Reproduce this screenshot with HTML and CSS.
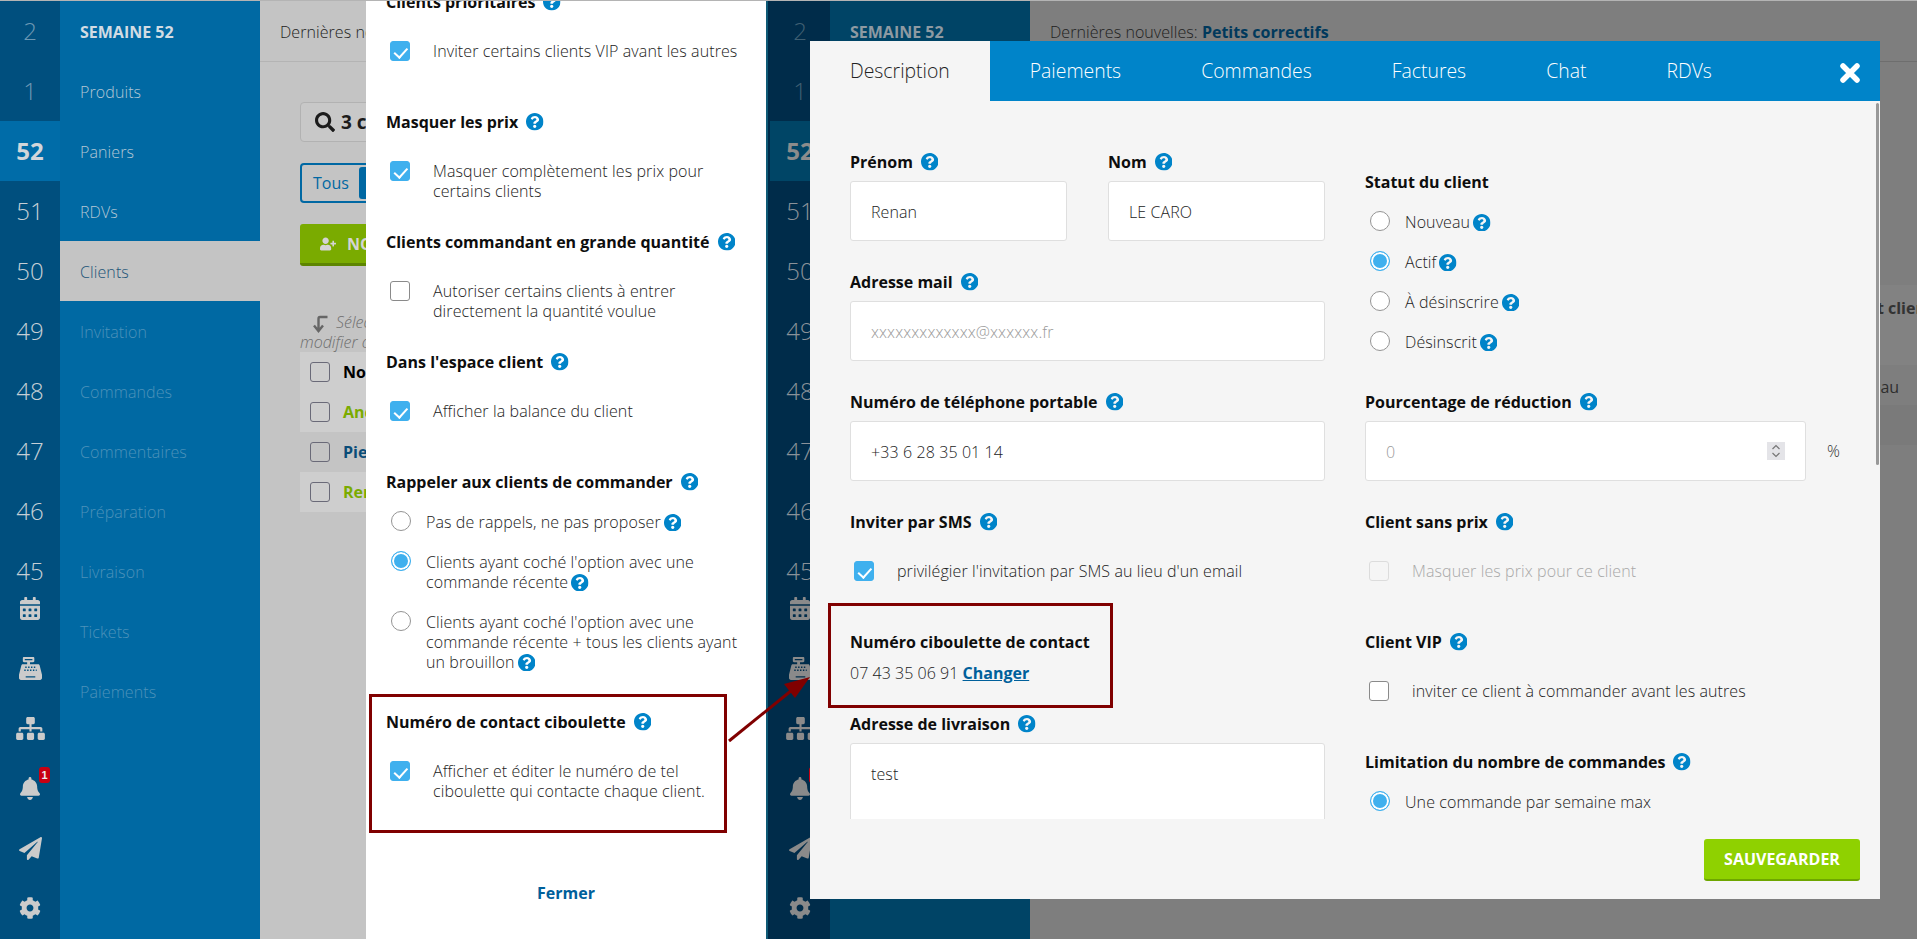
FILE: index.html
```html
<!DOCTYPE html>
<html lang="fr">
<head>
<meta charset="utf-8">
<title>Clients</title>
<link rel="stylesheet" href="styles.css">
</head>
<body>
<svg class="sprite" aria-hidden="true">
  <symbol id="i-help" viewBox="8 8 496 496"><path d="M504 256c0 136.997-111.043 248-248 248S8 392.997 8 256C8 119.083 119.043 8 256 8s248 111.083 248 248zM262.655 90c-54.497 0-89.255 22.957-116.549 63.758-3.536 5.286-2.353 12.415 2.715 16.258l34.699 26.31c5.205 3.947 12.621 3.008 16.665-2.122 17.864-22.658 30.113-35.797 57.303-35.797 20.429 0 45.698 13.148 45.698 32.958 0 14.976-12.363 22.667-32.534 33.976C247.128 238.528 216 254.941 216 296v4c0 6.627 5.373 12 12 12h56c6.627 0 12-5.373 12-12v-1.333c0-28.462 83.186-29.647 83.186-106.667 0-58.002-60.165-102-116.531-102zM256 338c-25.365 0-46 20.635-46 46 0 25.364 20.635 46 46 46s46-20.636 46-46c0-25.365-20.635-46-46-46z"/></symbol>
  <symbol id="i-cal" viewBox="0 0 448 512"><path d="M0 464c0 26.5 21.5 48 48 48h352c26.5 0 48-21.5 48-48V192H0v272zm320-196c0-6.6 5.4-12 12-12h40c6.6 0 12 5.4 12 12v40c0 6.6-5.4 12-12 12h-40c-6.6 0-12-5.4-12-12v-40zm0 128c0-6.6 5.4-12 12-12h40c6.6 0 12 5.4 12 12v40c0 6.6-5.4 12-12 12h-40c-6.6 0-12-5.4-12-12v-40zM192 268c0-6.6 5.4-12 12-12h40c6.6 0 12 5.4 12 12v40c0 6.6-5.4 12-12 12h-40c-6.6 0-12-5.4-12-12v-40zm0 128c0-6.6 5.4-12 12-12h40c6.6 0 12 5.4 12 12v40c0 6.6-5.4 12-12 12h-40c-6.6 0-12-5.4-12-12v-40zM64 268c0-6.6 5.4-12 12-12h40c6.6 0 12 5.4 12 12v40c0 6.6-5.4 12-12 12H76c-6.6 0-12-5.4-12-12v-40zm0 128c0-6.6 5.4-12 12-12h40c6.6 0 12 5.4 12 12v40c0 6.6-5.4 12-12 12H76c-6.6 0-12-5.4-12-12v-40zM400 64h-48V16c0-8.8-7.2-16-16-16h-32c-8.8 0-16 7.2-16 16v48H160V16c0-8.8-7.2-16-16-16h-32c-8.8 0-16 7.2-16 16v48H48C21.5 64 0 85.5 0 112v48h448v-48c0-26.5-21.5-48-48-48z"/></symbol>
  <symbol id="i-cash" viewBox="0 0 24 24"><path fill-rule="evenodd" d="M4 1.2c0-.6.5-1.2 1.2-1.2h9.6c.7 0 1.2.6 1.2 1.2v3c0 .6-.5 1.2-1.200 1.200H11.500V7.500H20c.8 0 1.300.5 1.500 1.200L24 18.500V22c0 1.100-.9 2-2 2H2c-1.100 0-2-.9-2-2v-3.500L2.500 8.700C2.700 8 3.200 7.500 4 7.500h4.500V5.400H5.200C4.500 5.400 4 4.800 4 4.200zM6 2v1.500h8V2zM6.500 10v1.500H8V10zm3 0v1.500H11V10zm3 0v1.500H14V10zm3 0v1.500H17V10zM5.500 13v1.500H7V13zm3 0v1.500H10V13zm3 0v1.500H13V13zm3 0v1.500H16V13zm3 0v1.500H18.500V13zM7 20v1.500h10V20z"/></symbol>
  <symbol id="i-map" viewBox="0 0 640 512"><path d="M128 352H32c-17.67 0-32 14.33-32 32v96c0 17.67 14.33 32 32 32h96c17.67 0 32-14.33 32-32v-96c0-17.67-14.33-32-32-32zm-24-80h192v48h48v-48h192v48h48v-57.59c0-21.17-17.23-38.41-38.41-38.41H344v-64h40c17.67 0 32-14.33 32-32V32c0-17.67-14.33-32-32-32H256c-17.67 0-32 14.33-32 32v96c0 17.67 14.33 32 32 32h40v64H94.41C73.23 224 56 241.23 56 262.41V320h48v-48zm264 80h-96c-17.67 0-32 14.33-32 32v96c0 17.67 14.33 32 32 32h96c17.67 0 32-14.33 32-32v-96c0-17.67-14.33-32-32-32zm240 0h-96c-17.67 0-32 14.33-32 32v96c0 17.67 14.33 32 32 32h96c17.67 0 32-14.33 32-32v-96c0-17.67-14.33-32-32-32z"/></symbol>
  <symbol id="i-bell" viewBox="0 0 448 512"><path d="M224 512c35.32 0 63.97-28.65 63.97-64H160.03c0 35.35 28.65 64 63.97 64zm215.39-149.71c-19.32-20.76-55.47-51.99-55.47-154.29 0-77.7-54.48-139.9-127.94-155.16V32c0-17.67-14.32-32-31.98-32s-31.98 14.33-31.98 32v20.84C118.56 68.1 64.08 130.3 64.08 208c0 102.3-36.15 133.53-55.47 154.29-6 6.45-8.66 14.16-8.61 21.71.11 16.4 12.98 32 32.1 32h383.8c19.12 0 32-15.6 32.1-32 .05-7.55-2.61-15.27-8.61-21.71z"/></symbol>
  <symbol id="i-plane" viewBox="0 0 512 512"><path d="M476 3.2L12.5 270.6c-18.1 10.4-15.8 35.6 2.2 43.2L121 358.4l287.3-253.2c5.5-4.9 13.3 2.6 8.6 8.3L176 407v80.5c0 23.6 28.5 32.9 42.5 15.8L282 426l124.6 52.2c14.2 6 30.4-2.9 33-18.2l72-432C515 7.8 493.3-6.8 476 3.2z"/></symbol>
  <symbol id="i-cog" viewBox="0 0 512 512"><path d="M487.4 315.7l-42.6-24.6c4.3-23.2 4.3-47 0-70.2l42.6-24.6c4.9-2.8 7.1-8.6 5.5-14-11.1-35.6-30-67.8-54.7-94.6-3.8-4.1-10-5.1-14.8-2.3L380.8 110c-17.9-15.4-38.5-27.3-60.8-35.1V25.800c0-5.600-3.900-10.500-9.400-11.700-36.700-8.200-74.300-7.800-109.200 0-5.500 1.200-9.400 6.100-9.400 11.700V75c-22.200 7.900-42.800 19.800-60.800 35.100L88.700 85.500c-4.900-2.800-11-1.900-14.800 2.300-24.700 26.700-43.600 58.900-54.700 94.600-1.700 5.400.6 11.200 5.500 14L67.300 221c-4.300 23.200-4.300 47 0 70.200l-42.600 24.600c-4.900 2.800-7.100 8.600-5.500 14 11.100 35.600 30 67.800 54.700 94.600 3.800 4.100 10 5.100 14.800 2.300l42.600-24.600c17.900 15.400 38.500 27.300 60.800 35.100v49.200c0 5.600 3.900 10.500 9.400 11.700 36.700 8.200 74.300 7.800 109.200 0 5.500-1.200 9.400-6.100 9.400-11.700v-49.200c22.200-7.900 42.800-19.800 60.800-35.100l42.600 24.600c4.900 2.800 11 1.900 14.800-2.300 24.700-26.700 43.600-58.900 54.700-94.600 1.500-5.500-.7-11.300-5.600-14.100zM256 336c-44.100 0-80-35.900-80-80s35.900-80 80-80 80 35.900 80 80-35.900 80-80 80z"/></symbol>
  <symbol id="i-search" viewBox="0 0 512 512"><path d="M505 442.700L405.300 343c-4.500-4.500-10.600-7-17-7H372c27.600-35.300 44-79.700 44-128C416 93.100 322.900 0 208 0S0 93.100 0 208s93.100 208 208 208c48.300 0 92.700-16.400 128-44v16.300c0 6.400 2.500 12.500 7 17l99.700 99.700c9.400 9.400 24.600 9.400 33.900 0l28.300-28.300c9.400-9.400 9.400-24.600.1-34zM208 336c-70.700 0-128-57.200-128-128 0-70.700 57.200-128 128-128 70.700 0 128 57.200 128 128 0 70.700-57.200 128-128 128z"/></symbol>
  <symbol id="i-user" viewBox="0 0 640 512"><path d="M624 208h-64v-64c0-8.800-7.200-16-16-16h-32c-8.800 0-16 7.200-16 16v64h-64c-8.800 0-16 7.200-16 16v32c0 8.800 7.200 16 16 16h64v64c0 8.800 7.200 16 16 16h32c8.800 0 16-7.200 16-16v-64h64c8.800 0 16-7.200 16-16v-32c0-8.800-7.200-16-16-16zm-400 48c70.700 0 128-57.300 128-128S294.700 0 224 0 96 57.300 96 128s57.300 128 128 128zm89.600 32h-16.700c-22.200 10.200-46.900 16-72.900 16s-50.600-5.800-72.900-16h-16.700C60.200 288 0 348.200 0 422.400V464c0 26.500 21.500 48 48 48h352c26.500 0 48-21.500 48-48v-41.600c0-74.200-60.200-134.400-134.400-134.400z"/></symbol>
</svg>

<div class="stage">
  <!-- LEFT SCREENSHOT -->
  <section class="shot shot-left">
    <nav class="weeks">
      <div class="week-list">
        <div class="week dim">2</div><div class="week dim">1</div><div class="week current">52</div><div class="week">51</div><div class="week">50</div><div class="week">49</div><div class="week">48</div><div class="week">47</div><div class="week">46</div><div class="week">45</div>
      </div>
      <div class="tool"><svg class="ti ti-cal"><use href="#i-cal"/></svg></div>
      <div class="tool"><svg class="ti ti-cash"><use href="#i-cash"/></svg></div>
      <div class="tool"><svg class="ti ti-map"><use href="#i-map"/></svg></div>
      <div class="tool"><svg class="ti ti-cal"><use href="#i-bell"/></svg><span class="badge">1</span></div>
      <div class="tool"><svg class="ti ti-cash"><use href="#i-plane"/></svg></div>
      <div class="tool"><svg class="ti ti-cog"><use href="#i-cog"/></svg></div>
    </nav>
    <nav class="menu">
      <div class="mi head">SEMAINE 52</div>
      <div class="mi">Produits</div><div class="mi">Paniers</div><div class="mi">RDVs</div><div class="mi active">Clients</div>
      <div class="mi off">Invitation</div><div class="mi off">Commandes</div><div class="mi off">Commentaires</div><div class="mi off">Préparation</div><div class="mi off">Livraison</div><div class="mi off">Tickets</div><div class="mi off">Paiements</div>
    </nav>
    <main class="main">
      <div class="topbar">Dernières no</div>
      <div class="list-page">
        <div class="searchbox"><svg class="search-ic"><use href="#i-search"/></svg><b>3 c</b></div>
        <div class="toggle"><span class="toggle-off">Tous</span><span class="toggle-on"></span></div>
        <div class="newbtn"><svg class="user-ic"><use href="#i-user"/></svg><b>NO</b></div>
        <div class="hint"><svg class="hint-arrow" viewBox="0 0 16 18"><path d="M15 2H7.500Q6 2 6 4v11M1.500 10.500 6 16l4.500-5.500" fill="none" stroke="#666" stroke-width="2.400"/></svg><i>Sélec<br>modifier c</i></div>
        <div class="trow band tall"><span class="box"></span><b>Nom</b></div>
        <div class="trow band"><span class="box"></span><b class="green">And</b></div>
        <div class="trow"><span class="box"></span><b class="navy">Pie</b></div>
        <div class="trow band"><span class="box"></span><b class="green">Ren</b></div>
      </div>
    </main>

    <aside class="panel">
      <div class="panel-inner">
        <div class="title">Clients prioritaires <svg class="help"><use href="#i-help"/></svg></div>
        <div class="opt"><span class="box on"></span><span>Inviter certains clients VIP avant les autres</span></div>
        <div class="title">Masquer les prix <svg class="help"><use href="#i-help"/></svg></div>
        <div class="opt"><span class="box on"></span><span>Masquer complètement les prix pour certains clients</span></div>
        <div class="title">Clients commandant en grande quantité <svg class="help"><use href="#i-help"/></svg></div>
        <div class="opt"><span class="box"></span><span>Autoriser certains clients à entrer directement la quantité voulue</span></div>
        <div class="title">Dans l'espace client <svg class="help"><use href="#i-help"/></svg></div>
        <div class="opt"><span class="box on"></span><span>Afficher la balance du client</span></div>
        <div class="title tight">Rappeler aux clients de commander <svg class="help"><use href="#i-help"/></svg></div>
        <div class="radios spaced">
          <div class="radio"><span class="dot"></span><span class="rl">Pas de rappels, ne pas proposer<svg class="help in"><use href="#i-help"/></svg></span></div>
          <div class="radio"><span class="dot on"></span><span class="rl">Clients ayant coché l'option avec une commande récente<svg class="help in"><use href="#i-help"/></svg></span></div>
          <div class="radio"><span class="dot"></span><span class="rl">Clients ayant coché l'option avec une commande récente + tous les clients ayant un brouillon<svg class="help in"><use href="#i-help"/></svg></span></div>
        </div>
        <div class="title">Numéro de contact ciboulette <svg class="help"><use href="#i-help"/></svg></div>
        <div class="opt"><span class="box on"></span><span>Afficher et éditer le numéro de tel ciboulette qui contacte chaque client.</span></div>
        <div class="close-link">Fermer</div>
      </div>
    </aside>
  </section>

  <!-- RIGHT SCREENSHOT -->
  <section class="shot shot-right">
    <nav class="weeks">
      <div class="week-list">
        <div class="week dim">2</div><div class="week dim">1</div><div class="week current">52</div><div class="week">51</div><div class="week">50</div><div class="week">49</div><div class="week">48</div><div class="week">47</div><div class="week">46</div><div class="week">45</div>
      </div>
      <div class="tool"><svg class="ti ti-cal"><use href="#i-cal"/></svg></div>
      <div class="tool"><svg class="ti ti-cash"><use href="#i-cash"/></svg></div>
      <div class="tool"><svg class="ti ti-map"><use href="#i-map"/></svg></div>
      <div class="tool"><svg class="ti ti-cal"><use href="#i-bell"/></svg><span class="badge">1</span></div>
      <div class="tool"><svg class="ti ti-cash"><use href="#i-plane"/></svg></div>
      <div class="tool"><svg class="ti ti-cog"><use href="#i-cog"/></svg></div>
    </nav>
    <nav class="menu">
      <div class="mi head">SEMAINE 52</div>
    </nav>
    <main class="main">
      <div class="topbar">Dernières nouvelles: <b class="news">Petits correctifs</b></div>
      <div class="client-table">
        <div class="ct-row ct-head"><b>Statut client</b></div>
        <div class="ct-row ct-plain"><span>Nouveau</span></div>
        <div class="ct-row ct-alt"></div>
        <div class="ct-row ct-plain"></div>
      </div>
    </main>

    <div class="modal">
      <div class="tabs">
        <div class="tab active">Description</div>
        <div class="tab">Paiements</div>
        <div class="tab">Commandes</div>
        <div class="tab">Factures</div>
        <div class="tab">Chat</div>
        <div class="tab">RDVs</div>
        <svg class="x" viewBox="0 0 20 20"><path d="M3 3l14 14M17 3 3 17" stroke="#fff" stroke-width="5.500" fill="none" stroke-linecap="round"/></svg>
      </div>
      <div class="modal-body">
        <div class="col">
          <div class="two">
            <div class="field"><div class="title sm">Prénom <svg class="help"><use href="#i-help"/></svg></div><div class="input">Renan</div></div>
            <div class="field"><div class="title sm">Nom <svg class="help"><use href="#i-help"/></svg></div><div class="input">LE CARO</div></div>
          </div>
          <div class="field"><div class="title sm">Adresse mail <svg class="help"><use href="#i-help"/></svg></div><div class="input muted">xxxxxxxxxxxxx@xxxxxx.fr</div></div>
          <div class="field"><div class="title sm">Numéro de téléphone portable <svg class="help"><use href="#i-help"/></svg></div><div class="input">+33 6 28 35 01 14</div></div>
          <div class="title">Inviter par SMS <svg class="help"><use href="#i-help"/></svg></div>
          <div class="opt"><span class="box on"></span><span>privilégier l'invitation par SMS au lieu d'un email</span></div>
          <div class="title val-title">Numéro ciboulette de contact</div>
          <div class="value">07 43 35 06 91 <a class="change">Changer</a></div>
          <div class="title sm">Adresse de livraison <svg class="help"><use href="#i-help"/></svg></div>
          <div class="input area">test</div>
        </div>
        <div class="col col-r">
          <div class="title statut">Statut du client</div>
          <div class="radios status">
            <div class="radio"><span class="dot"></span><span class="rl">Nouveau<svg class="help in"><use href="#i-help"/></svg></span></div>
            <div class="radio"><span class="dot on"></span><span class="rl">Actif<svg class="help in"><use href="#i-help"/></svg></span></div>
            <div class="radio"><span class="dot"></span><span class="rl">À désinscrire<svg class="help in"><use href="#i-help"/></svg></span></div>
            <div class="radio"><span class="dot"></span><span class="rl">Désinscrit<svg class="help in"><use href="#i-help"/></svg></span></div>
          </div>
          <div class="field"><div class="title sm">Pourcentage de réduction <svg class="help"><use href="#i-help"/></svg></div>
            <div class="pct"><div class="input muted grow">0<span class="spin"><svg viewBox="0 0 18 18"><path d="M5.500 7 9 3.500 12.500 7M5.500 11 9 14.500 12.500 11" fill="none" stroke="#777" stroke-width="1.200"/></svg></span></div><span class="pct-sign">%</span></div>
          </div>
          <div class="title">Client sans prix <svg class="help"><use href="#i-help"/></svg></div>
          <div class="opt faded"><span class="box off"></span><span>Masquer les prix pour ce client</span></div>
          <div class="title">Client VIP <svg class="help"><use href="#i-help"/></svg></div>
          <div class="opt"><span class="box"></span><span>inviter ce client à commander avant les autres</span></div>
          <div class="title tight">Limitation du nombre de commandes <svg class="help"><use href="#i-help"/></svg></div>
          <div class="radio"><span class="dot on"></span><span class="rl">Une commande par semaine max</span></div>
        </div>
      </div>
      <div class="modal-foot"><div class="save">SAUVEGARDER</div></div>
      <div class="scrollbar"></div>
    </div>
  </section>

  <!-- ANNOTATIONS -->
  <div class="mark mark-a"></div>
  <div class="mark mark-b"></div>
  <svg class="arrow" viewBox="0 0 90 80"><path d="M3 72 71 17" stroke="#800000" stroke-width="3" fill="none"/><path d="M84 8 58 15 69 29z" fill="#800000"/></svg>
</div>
</body>
</html>
```

FILE: styles.css
```css
* { box-sizing: border-box; }
html, body { margin: 0; padding: 0; }
body {
  width: 1917px; height: 939px; overflow: hidden;
  font-family: "Open Sans", "Liberation Sans", sans-serif;
  font-size: 16px; line-height: 20px; font-weight: 300; color: #222;
  letter-spacing: .1px;
  background: #fff;
}
.sprite { position: absolute; width: 0; height: 0; }
.stage { position: relative; display: flex; width: 1917px; height: 939px; border-top: 1px solid #b4b4b4; }

/* screenshot frames */
.shot { position: relative; display: flex; height: 938px; overflow: hidden; }
.shot-left {
  width: 766px;
  --wk: #004f7e; --wk-cur: #006ca8; --wk-txt: #c6cfd6; --wk-dim: #6c98b4; --wk-strong: #d2d6da;
  --mn: #0069a3; --mn-txt: #b3c7d5; --mn-off: #4c92ba; --mn-head: #d2dce3;
  --bg: #c4c4c4; --ic: #cbcbcb;
}
.shot-right {
  flex: 1; border-left: 2px solid #0f5a76;
  --wk: #002c4a; --wk-cur: #004566; --wk-txt: #8a9299; --wk-dim: #3f5f72; --wk-strong: #8c8c8c;
  --mn: #004466; --mn-txt: #6f8a9b; --mn-off: #2b6486; --mn-head: #8e9aa2;
  --bg: #7e7e7e; --ic: #8a8a8a;
}

/* week rail */
.weeks { flex: none; width: 60px; background: var(--wk); }
.week-list { margin-bottom: -23px; }
.week { height: 60px; display: flex; align-items: center; justify-content: center; font-size: 24px; letter-spacing: 0; color: var(--wk-txt); }
.week.dim { color: var(--wk-dim); }
.week.current { background: var(--wk-cur); color: var(--wk-strong); font-weight: 700; }
.tool { position: relative; height: 60px; display: flex; align-items: center; justify-content: center; }
.ti { fill: var(--ic); height: 23px; }
.ti-cal { width: 20px; }
.ti-cash { width: 23px; }
.ti-map { width: 29px; }
.ti-cog { width: 22px; height: 22px; }
.badge {
  position: absolute; left: 39px; top: 9px; width: 11px; height: 16px; border-radius: 3px;
  background: #c80012; color: #eee; font: 700 11px/16px "Liberation Sans", sans-serif; text-align: center;
}
.shot-right .weeks { width: 62px; padding-left: 2px; }

/* menu */
.menu { flex: none; width: 200px; background: var(--mn); }
.mi { height: 60px; padding: 2px 0 0 20px; display: flex; align-items: center; color: var(--mn-txt); font-weight: 300; }
.mi.head { color: var(--mn-head); font-weight: 700; letter-spacing: 0; }
.mi.active { background: var(--bg); color: #1d5478; }
.mi.off { color: var(--mn-off); }

/* main page behind */
.main { flex: 1; min-width: 0; background: var(--bg); overflow: hidden; }
.shot-left .main { flex: none; width: 106px; }
.topbar { height: 61px; padding: 21px 0 0 20px; border-bottom: 1px solid #b4b4b4; white-space: nowrap; color: #1d1d1d; font-weight: 300; letter-spacing: .06px; }
.shot-right .topbar { border-bottom-color: #6e6e6e; }
.news { color: #00395c; font-weight: 700; letter-spacing: 0; }
.list-page { padding: 40px 0 0 40px; width: 106px; font-weight: 400; letter-spacing: 0; white-space: nowrap; }
.searchbox { width: 100px; height: 40px; display: flex; align-items: center; gap: 6px; padding-left: 14px; background: #c8c8c8; border: 1px solid #b2b2b2; border-radius: 4px; font-size: 19px; color: #1c1c1c; }
.search-ic { width: 20px; height: 20px; fill: #1c1c1c; }
.toggle { width: 100px; margin-top: 21px; height: 40px; display: flex; align-items: stretch; padding: 2px; border: 2px solid #0068a3; border-radius: 4px; color: #0068a3; font-size: 16px; }
.toggle-off { padding: 0 10px 0 9px; display: flex; align-items: center; }
.toggle-on { flex: 1; background: #0068a3; border-radius: 3px; }
.newbtn { width: 100px; margin-top: 21px; height: 42px; display: flex; align-items: center; gap: 11px; padding-left: 20px; background: #7aab00; border-bottom: 3px solid #5d8500; border-radius: 3px; color: #d4d4d4; }
.user-ic { width: 16px; height: 14px; fill: #d4d4d4; }
.hint { position: relative; margin-top: 46px; font-size: 16px; line-height: 20px; color: #6e6e6e; font-weight: 300; }
.hint i { display: block; text-indent: 36px; }
.hint-arrow { position: absolute; left: 12px; top: 3px; width: 17px; height: 18px; }
.trow { width: 100px; height: 40px; display: flex; align-items: center; gap: 13px; padding-left: 10px; }
.band { background: #cecece; }
.trow b { color: #000; }
.trow .green { color: #7aab00; }
.trow .navy { color: #0a4c78; }
.trow .box { background: transparent; border-color: #6a6a78; margin: 0; }

/* drawer */
.panel { position: absolute; left: 366px; top: 0; width: 400px; height: 938px; background: #fff; overflow: hidden; }
.panel-inner { margin-top: -9px; padding: 0 20px; }
.title { display: flex; align-items: center; gap: 8px; height: 20px; margin-bottom: 29px; font-weight: 700; color: #0e0e0e; white-space: nowrap; letter-spacing: 0; }
.title.tight { margin-bottom: 19px; }
.title.sm { margin-bottom: 9px; }
.help { width: 17.500px; height: 17.500px; fill: #0084c9; flex: none; }
.help.in { margin-left: 3px; vertical-align: -3px; }
.opt { display: flex; min-height: 40px; margin: 0 0 31px 4px; gap: 23px; }
.radio { display: flex; gap: 15px; margin-left: 5px; }
.rl { position: relative; top: 1px; }
.radios { display: flex; flex-direction: column; gap: 20px; }
.radios.spaced { margin-bottom: 41px; }
.box { flex: none; position: relative; width: 20px; height: 20px; border: 1px solid #8a8a8a; border-radius: 3px; background: #fff; }
.box.on { background: #3fb0ee; border-color: #3fb0ee; }
.box.on::after {
  content: ""; position: absolute; left: 6px; top: 2.500px; width: 6px; height: 10.500px;
  border: solid #fff; border-width: 0 2.500px 2.500px 0; transform: rotate(42deg);
}
.box.off { background: transparent; border-color: #dcdcdc; }
.dot { flex: none; width: 20px; height: 20px; border-radius: 50%; border: 1px solid #949494; background: #fff; }
.dot.on { border-color: #3fb0ee; background: #3fb0ee; box-shadow: inset 0 0 0 2px #fff; }
.close-link { margin-top: 82px; text-align: center; font-weight: 700; color: #00609b; letter-spacing: 0; }

/* modal */
.modal { position: absolute; left: 42px; top: 40px; width: 1070px; height: 858px; background: #f5f5f5; display: flex; flex-direction: column; }
.tabs { position: relative; flex: none; height: 60px; display: flex; background: #0084c9; }
.tab { padding: 0 40px; display: flex; align-items: center; font-size: 19.400px; letter-spacing: 0; color: #fff; }
.tab.active { background: #f5f5f5; color: #222; }
.x { position: absolute; right: 20px; top: 22px; width: 20px; height: 20px; }
.modal-body { flex: none; height: 718px; overflow: hidden; display: flex; gap: 40px; padding: 51px 0 0 40px; }
.col { flex: none; width: 475px; }
.col-r { width: 475px; padding-top: 20px; }
.two { display: flex; gap: 41px; }
.two .field { flex: 1; }
.field { margin-bottom: 31px; }
.input { position: relative; height: 60px; padding: 2px 20px 0; display: flex; align-items: center; background: #fff; border: 1px solid #dfdfdf; border-radius: 3px; color: #222; }
.input.muted { color: #9a9a9a; }
.input.area { height: 140px; align-items: flex-start; padding-top: 20px; }
.val-title { margin-bottom: 11px; }
.value { height: 20px; margin-bottom: 31px; white-space: nowrap; letter-spacing: .03px; }
.change { font-weight: 700; color: #00609b; text-decoration: underline; letter-spacing: 0; }
.statut { margin-bottom: 19px; }
.status { margin-bottom: 41px; }
.pct { display: flex; align-items: center; gap: 21px; }
.grow { flex: none; width: 441px; }
.pct-sign { color: #333; }
.spin { position: absolute; right: 20px; top: 20px; width: 18px; height: 18px; background: #e4e4e8; }
.spin svg { display: block; width: 18px; height: 18px; }
.faded { color: #a8a8a8; }
.modal-foot { display: flex; justify-content: flex-end; padding: 20px 20px 0 0; }
.save { width: 156px; height: 42px; display: flex; align-items: center; justify-content: center; background: #8fd100; border-bottom: 2px solid #6ea600; border-radius: 3px; color: #fff; font-weight: 700; letter-spacing: 0; }
.scrollbar { position: absolute; right: 1px; top: 62px; width: 3px; height: 362px; background: #999; border-radius: 2px; }

/* table peeking to the right of the modal */
.client-table { margin-top: 223px; width: 887px; }
.ct-row { height: 40px; padding: 4px 0 0 802px; display: flex; align-items: center; white-space: nowrap; color: #2e2e2e; overflow: hidden; font-weight: 400; letter-spacing: 0; }
.ct-head { height: 80px; background: #828282; padding: 0 0 34px 804px; }
.ct-head b { color: #333; }
.ct-alt { background: #7a7a7a; }

/* annotations */
.mark { position: absolute; border: 3px solid #800000; }
.mark-a { left: 369px; top: 693px; width: 358px; height: 139px; }
.mark-b { left: 828px; top: 602px; width: 285px; height: 105px; }
.arrow { position: absolute; left: 726px; top: 668px; width: 90px; height: 80px; }
```
